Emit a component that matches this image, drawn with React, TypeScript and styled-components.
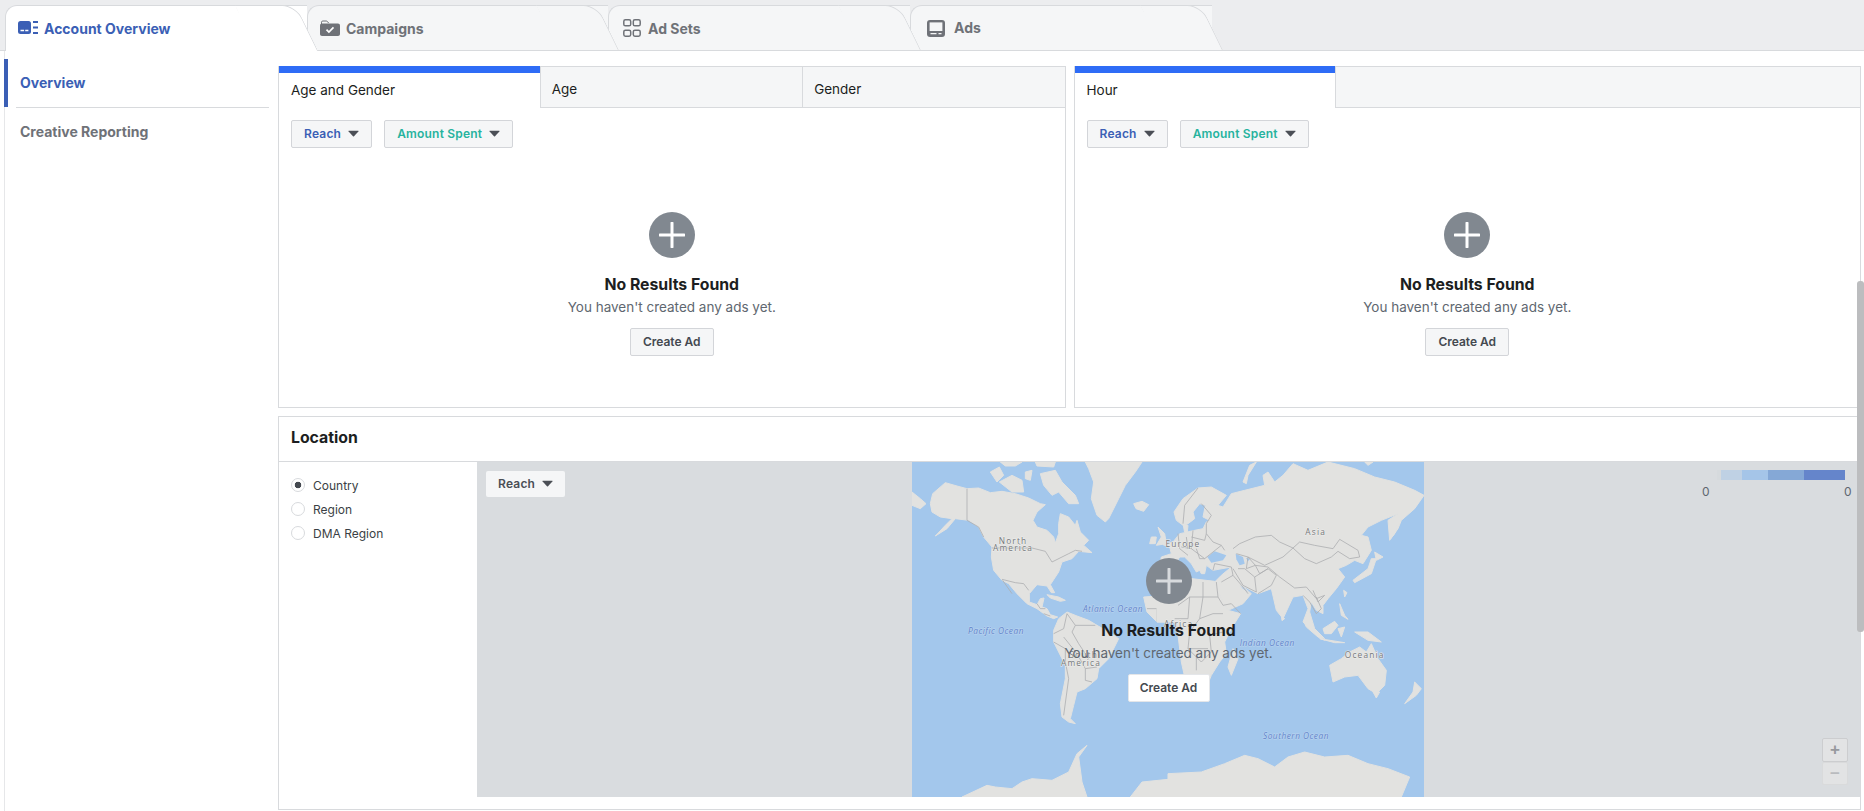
import React from "react";
import styled, { createGlobalStyle } from "styled-components";

/* ===== page ===== */
const GlobalStyle = createGlobalStyle`
  html, body {
    margin: 0;
    padding: 0;
    height: 811px;
    overflow: hidden;
    background: #ffffff;
    font-family: Inter, "Liberation Sans", sans-serif;
    color: #1c1e21;
  }
  * { box-sizing: border-box; }
`;

const Page = styled.div`
  position: relative;
  width: 1864px;
  height: 811px;
  overflow: hidden;
`;

/* ===== top tabs ===== */
const TabBar = styled.div`
  display: flex;
  height: 51px;
  padding: 5px 0 0 5px;
  background: #ecedef;
  border-bottom: 1px solid #d8dadd;
`;

const Tab = styled.div<{ $active?: boolean; $z: number; $inset: number; $gap: number; $width: number }>`
  position: relative;
  z-index: ${(p) => p.$z};
  flex: 0 0 ${(p) => p.$width}px;
  height: ${(p) => (p.$active ? 46 : 45)}px;
  display: flex;
  align-items: center;
  gap: ${(p) => p.$gap}px;
  padding: 0 0 ${(p) => (p.$active ? 1 : 0)}px ${(p) => p.$inset}px;
  background: ${(p) => (p.$active ? "#ffffff" : "#f5f6f7")};
  border-top: 1px solid #d8dadd;
  border-left: 1px solid #d8dadd;
  border-top-left-radius: 12px;
  font-size: 14px;
  font-weight: 700;
  color: ${(p) => (p.$active ? "#3b5fb5" : "#6f7278")};

  &::after {
    content: "";
    position: absolute;
    top: -1px;
    bottom: 0;
    right: 0;
    width: 60px;
    background: ${(p) => (p.$active ? "#ffffff" : "#f5f6f7")};
    border-top: 1px solid #d8dadd;
    border-right: 1px solid #d8dadd;
    border-top-right-radius: 14px;
    transform: skewX(26deg);
  }
`;

const TabContent = styled.span<{ $lift?: boolean }>`
  position: relative;
  z-index: 1;
  display: flex;
  top: ${(p) => (p.$lift ? -1 : 0)}px;
`;

/* ===== shell ===== */
const Main = styled.div`
  display: flex;
  height: 760px;
  margin-left: 4px;
`;

const Sidebar = styled.nav`
  flex: 0 0 274px;
  padding-top: 8px;
  border-left: 1px solid #e6e7e9;
`;

const SideItem = styled.div<{ $active?: boolean }>`
  position: relative;
  height: ${(p) => (p.$active ? 49 : 48)}px;
  margin-left: 11px;
  width: 253px;
  display: flex;
  align-items: center;
  padding: 0 0 2px 4px;
  font-size: 14px;
  font-weight: 700;
  color: ${(p) => (p.$active ? "#3b5fb5" : "#6f7278")};
  border-bottom: ${(p) => (p.$active ? "1px solid #d8dadd" : "0")};

  ${(p) =>
    p.$active &&
    `&::before {
      content: "";
      position: absolute;
      left: -12px;
      top: 0;
      bottom: 0;
      width: 4px;
      background: #3b5fb5;
    }`}
`;

const Content = styled.main`
  flex: 1;
  display: flex;
  flex-direction: column;
  gap: 8px;
  padding: 15px 3px 0 0;
`;

const ChartRow = styled.div`
  display: flex;
  gap: 8px;
  height: 342px;
`;

const ChartPanel = styled.section`
  flex: 1;
  min-width: 0;
  border: 1px solid #d8dadd;
  background: #ffffff;
`;

const TabStrip = styled.div`
  display: flex;
  height: 41px;
`;

const StripTab = styled.div<{ $active?: boolean; $fill?: boolean }>`
  position: relative;
  flex: ${(p) => (p.$fill ? "1 1 0" : p.$active ? "0 0 33.2%" : "0 0 33.4%")};
  display: flex;
  align-items: center;
  padding: 4px 0 0 ${(p) => (p.$active ? 12 : 11)}px;
  font-size: 13.5px;
  color: #1c1e21;
  background: ${(p) => (p.$active ? "#ffffff" : "#f5f6f7")};
  border-bottom: ${(p) => (p.$active ? "0" : "1px solid #d8dadd")};
  border-left: ${(p) => (p.$active ? "0" : "1px solid #d8dadd")};

  ${(p) =>
    p.$active &&
    `&::before {
      content: "";
      position: absolute;
      left: 0;
      right: 0;
      top: -1px;
      height: 7px;
      background: #2e6cf6;
    }`}
`;

const Toolbar = styled.div`
  display: flex;
  gap: 12px;
  padding: 12px 12px 0;
`;

const Dropdown = styled.button<{ $tone: string; $plain?: boolean }>`
  display: inline-flex;
  align-items: center;
  gap: 7px;
  height: ${(p) => (p.$plain ? 26 : 28)}px;
  padding: 0 12px 1px 12px;
  font-family: inherit;
  font-size: 12px;
  font-weight: 600;
  letter-spacing: 0.2px;
  color: ${(p) => p.$tone};
  background: #f5f6f7;
  border: ${(p) => (p.$plain ? "0" : "1px solid #d3d5d9")};
  border-radius: 2px;
`;

const CaretIcon = () => (
  <svg width="11" height="7" viewBox="0 0 11 7">
    <path d="M1 .7h9c.5 0 .7.5.4.9L6 6.2c-.3.3-.7.3-1 0L.6 1.6C.3 1.2.5.7 1 .7z" fill="#4b4f56" />
  </svg>
);

/* ===== no results ===== */
const Empty = styled.div<{ $overlay?: boolean }>`
  display: flex;
  flex-direction: column;
  align-items: center;
  margin-top: ${(p) => (p.$overlay ? 0 : 64)}px;

  ${(p) =>
    p.$overlay &&
    `position: absolute;
     left: 0;
     right: 0;
     top: 96px;`}
`;

const PlusBadge = styled.div`
  position: relative;
  width: 46px;
  height: 46px;
  border-radius: 50%;
  background: #818890;
`;

const PlusIcon = styled.svg`
  position: absolute;
  left: 10px;
  top: 10px;
`;

const EmptyTitle = styled.div`
  margin-top: 17px;
  height: 20px;
  line-height: 20px;
  font-size: 15.8px;
  font-weight: 700;
  color: #1c1e21;
`;

const EmptyText = styled.div`
  margin-top: 2px;
  height: 20px;
  line-height: 20px;
  font-size: 13.5px;
  color: #606770;
`;

const CreateButton = styled.button<{ $light?: boolean }>`
  margin-top: 11px;
  width: ${(p) => (p.$light ? 82 : 84)}px;
  height: 28px;
  padding: 0 0 2px;
  font-family: inherit;
  font-size: 12px;
  font-weight: 600;
  color: #444950;
  background: ${(p) => (p.$light ? "#ffffff" : "#f5f6f7")};
  border: 1px solid ${(p) => (p.$light ? "#e4e6e9" : "#d3d5d9")};
  border-radius: 2px;
`;

const NoResults = ({ overlay }: { overlay?: boolean }) => (
  <Empty $overlay={overlay}>
    <PlusBadge>
      <PlusIcon width="26" height="26" viewBox="0 0 26 26">
        <path d="M13 1v24M1 13h24" stroke={overlay ? "#d7dadd" : "#ffffff"} strokeWidth="3" strokeLinecap="round" />
      </PlusIcon>
    </PlusBadge>
    <EmptyTitle>No Results Found</EmptyTitle>
    <EmptyText>You haven't created any ads yet.</EmptyText>
    <CreateButton $light={overlay}>Create Ad</CreateButton>
  </Empty>
);

/* ===== location ===== */
const LocationPanel = styled.section`
  height: 394px;
  border: 1px solid #d8dadd;
  background: #ffffff;
`;

const LocationHeader = styled.h2`
  margin: 0;
  height: 45px;
  display: flex;
  align-items: center;
  padding: 0 0 4px 12px;
  font-size: 15.8px;
  font-weight: 700;
  color: #1c1e21;
  border-bottom: 1px solid #d8dadd;
`;

const LocationBody = styled.div`
  display: flex;
  height: 335px;
`;

const RadioColumn = styled.div`
  flex: 0 0 198px;
  display: flex;
  flex-direction: column;
  gap: 10px;
  padding: 16px 0 0 12px;
`;

const RadioRow = styled.label`
  display: flex;
  align-items: center;
  gap: 8px;
  height: 14px;
  font-size: 12px;
  color: #3b3f45;
`;

const RadioDot = styled.span<{ $on?: boolean }>`
  width: 14px;
  height: 14px;
  border-radius: 50%;
  border: 1px solid #d8dadd;
  background: ${(p) => (p.$on ? "radial-gradient(circle, #444950 0 3px, #ffffff 3.6px)" : "#ffffff")};
`;

const MapArea = styled.div`
  position: relative;
  flex: 1;
  display: flex;
  justify-content: center;
  background: #d9dcdf;
  overflow: hidden;
`;

const MapCanvas = styled.svg`
  display: block;
  flex: none;
  margin-right: 1px;
`;

const MapButtonSlot = styled.div`
  position: absolute;
  left: 9px;
  top: 9px;
`;

const Legend = styled.div`
  position: absolute;
  top: 8px;
  right: 0;
  width: 158px;
  height: 36px;
`;

const LegendBar = styled.div`
  position: absolute;
  left: 15px;
  top: 0;
  display: flex;
  height: 10px;
`;

const LegendStep = styled.span<{ $w: number; $c: string }>`
  width: ${(p) => p.$w}px;
  background: ${(p) => p.$c};
`;

const LegendValue = styled.span<{ $left: number }>`
  position: absolute;
  left: ${(p) => p.$left}px;
  top: 14px;
  font-size: 12px;
  line-height: 16px;
  color: #606770;
`;

const ZoomStack = styled.div`
  position: absolute;
  right: 12px;
  bottom: 12px;
  display: flex;
  flex-direction: column;
  width: 26px;
`;

const ZoomButton = styled.div<{ $dim?: boolean }>`
  height: ${(p) => (p.$dim ? 23 : 24)}px;
  display: flex;
  align-items: center;
  justify-content: center;
  font-family: "Liberation Sans", sans-serif;
  font-size: 17px;
  font-weight: 700;
  color: ${(p) => (p.$dim ? "#b9bbbe" : "#97999e")};
  background: #e2e3e4;
  border: 1px solid ${(p) => (p.$dim ? "#d9dadb" : "#cccdcf")};
  border-radius: 2px;
`;

const Scrollbar = styled.div`
  position: absolute;
  right: 0;
  top: 281px;
  width: 7px;
  height: 351px;
  background: #bcbdbf;
  border-radius: 3px;
`;

const MapLabel = styled.text<{ $ocean?: boolean }>`
  font-family: "Open Sans", "Liberation Sans", sans-serif;
  font-size: 25px;
  font-style: ${(p) => (p.$ocean ? "italic" : "normal")};
  letter-spacing: ${(p) => (p.$ocean ? 1.5 : 3.5)}px;
  text-anchor: middle;
  fill: ${(p) => (p.$ocean ? "#5f84cc" : "#74767a")};
  stroke: ${(p) => (p.$ocean ? "#bdd5ef" : "#eeeeec")};
  stroke-width: 3px;
  paint-order: stroke;
`;

/* map shapes are in 3x map pixels, west half and east half traced separately */
const WEST_LAND = [
  "M55 125 62 95 100 62 135 72 165 80 200 78 235 92 270 88 310 95 350 108 385 125 400 128 375 150 363 175 375 195 405 205 425 225 430 243 440 215 440 185 445 155 470 165 490 190 495 175 505 210 530 235 515 250 540 272 500 268 480 290 450 300 440 330 415 368 428 392 418 392 405 372 375 368 352 395 352 420 375 428 385 410 396 408 390 435 405 440 415 458 437 465 425 470 405 462 375 440 345 425 315 395 290 365 270 355 245 325 238 285 240 255 215 225 200 195 170 175 130 170 105 200 70 222 100 190 120 170 85 165 60 150Z",
  "M235 30 262 15 275 40 255 60Z",
  "M262 60 300 40 330 55 335 90 300 90Z",
  "M340 30 360 25 355 55 340 50Z",
  "M385 35 430 25 450 60 490 100 500 125 470 125 440 90 420 100 395 70Z",
  "M265 0H330L310 12 280 12Z",
  "M370 0H430L425 15 375 12Z",
  "M520 0H690L670 30 640 70 620 110 590 170 580 180 555 160 538 110 545 60 530 20Z",
  "M665 125 690 118 710 128 695 148 672 140Z",
  "M0 90 25 110 42 125 25 140 0 130Z",
  "M425 505 440 470 465 450 495 462 530 475 555 490 590 510 620 530 600 570 590 590 560 620 555 650 520 680 495 690 485 730 475 770 490 785 470 780 450 765 445 725 460 650 460 610 440 570 425 540Z",
  "M150 1005 225 970 250 975 300 980 330 960 360 950 420 955 470 930 495 875 525 850 500 885 510 960 525 1005Z",
  "M655 1005 690 960 768 952V1005Z",
  "M405 398 440 405 460 415 445 418 415 408Z",
  "M695 405 768 400V480H735L705 450Z",
];

const EAST_LAND = [
  "M-20 285 10 275 5 255-15 248 15 240 35 215 50 212 45 185 60 190 58 210 80 205 105 200 115 180 125 175 105 165 112 130 95 125 75 150 80 170 60 185 45 190 25 175 18 150 45 110 90 78 130 75 175 100 150 130 135 125 165 135 190 95 230 85 290 70 285 40 300 30 320 60 345 40 375 5 420 25 480 0 560 20 620 45 680 60 740 85 768 100 740 140 700 175 690 200 665 235 660 175 690 155 640 175 600 195 580 220 600 225 610 265 585 305 560 295 535 310 510 320 530 345 505 380 480 410 465 430 465 455 445 445 430 420 425 450 440 500 470 530 440 510 405 480 420 440 405 400 375 405 345 470 325 445 310 380 270 395 240 380 218 368 250 395 225 425 180 445 150 390 140 360 160 340 190 315 135 325 115 310 110 335 100 335 85 305 95 325 85 330 70 305 50 285 35 285 20 310-5 320-25 310Z",
  "M-30 195-10 215-5 245-35 250-20 225Z",
  "M-50 225-35 225-38 245-55 245Z",
  "M0 400 30 345 140 358 150 390 180 445 218 455 190 500 170 540 175 575 155 600 130 640 110 690 60 690 40 600 30 520 20 480-33 480-33 400Z",
  "M195 560 210 590 190 640 180 615Z",
  "M225 60 245 10 265 0 240 40 235 65Z",
  "M590 0H615L600 10Z",
  "M555 355 600 320 610 290 625 290 610 335 560 362Z",
  "M620 270 645 285 625 295Z",
  "M668 230 690 180 700 170 680 215Z",
  "M527 385 537 392 530 405Z",
  "M515 425 530 460 540 472 520 460Z",
  "M408 480 440 500 470 535 450 525 415 495Z",
  "M455 530 530 542 500 542Z",
  "M465 500 500 478 510 490 490 515 470 515Z",
  "M510 500 530 495 520 525Z",
  "M560 510 600 510 640 540 600 535Z",
  "M340 460 350 470 342 476Z",
  "M485 610 520 590 545 570 575 555 595 570 610 545 630 590 655 625 650 670 625 695 600 680 570 640 530 645 495 660Z",
  "M615 690 635 690 625 708Z",
  "M740 660 760 680 745 700 710 725 735 690Z",
  "M0 1005V935L100 930 170 905 230 880 270 890 320 915 360 885 410 870 470 885 540 880 600 905 660 920 725 945 700 1005Z",
];

const EAST_SEAS = [
  "M118 285 140 268 175 280 165 295 130 302Z",
  "M203 275 225 285 230 305 215 310 205 292Z",
  "M215 370 245 392 225 380Z",
  "M234 288 246 290 240 298Z",
];

const WEST_BORDERS = [
  "M165 80V175L200 195 215 225",
  "M240 258H360L400 268 420 300 470 275 490 265 510 268",
  "M270 352 310 362 335 365 350 385",
  "M375 425 385 440 400 440M395 455 415 462",
  "M425 515 455 500 465 455 490 490 550 490",
  "M455 525 495 575 520 620 555 615",
  "M425 540 460 560 460 600 470 650 455 760",
  "M490 490 480 510 500 545 530 590",
  "M520 620 520 655 540 660",
  "M272 355 300 395",
  "M705 440H768M735 440V480",
];

const EAST_BORDERS = [
  "M195 260 215 245 262 225 310 220 335 240 375 258",
  "M375 258 395 240 440 250 495 260 515 232 570 265 575 285 545 290 510 268 490 285 445 305 410 290 375 258",
  "M205 275 240 285 290 310 345 285 375 258",
  "M300 315 335 345 380 378 415 375 445 410 470 400",
  "M300 320 325 340 310 370 270 395",
  "M240 285 262 310 300 315",
  "M195 320 225 370 265 390 260 345 230 320 210 320",
  "M260 345 300 320",
  "M160 360 195 340 225 375 240 395",
  "M405 400 425 420 445 455 460 440 445 405",
  "M30 215 35 260 60 280",
  "M75 205 70 260 110 290 160 250 170 265",
  "M115 185 115 215 135 240 160 250",
  "M100 125 130 160 115 185",
  "M90 78 50 130 45 185",
  "M30 430 65 405 105 405 150 405 145 360",
  "M105 360V405L95 470 135 455 165 455",
  "M65 405 60 470 20 470",
  "M95 470 65 510 60 560 100 600 130 570 125 520 165 510",
  "M85 580V625M60 560H120",
  "M70 225 110 235 115 215M70 260 40 255M85 260 95 290 110 290M55 225 60 260",
  "M135 325 140 305 190 315 195 340",
  "M240 285 235 320 262 310M262 310 275 335 300 320",
  "M435 385 450 420 470 400",
  "M150 405 165 430 190 425 218 455",
];

const WorldMap = () => (
  <MapCanvas width="512" height="335" viewBox="0 0 1536 1005">
    <rect width="1536" height="1005" fill="#a3c7ec" />
    <g fill="#e2e2e0" stroke="#e2e2e0" strokeWidth="3" strokeLinejoin="round">
      {WEST_LAND.map((d) => (
        <path key={d} d={d} />
      ))}
    </g>
    <g fill="none" stroke="#aeb0b2" strokeWidth="2.5" strokeLinejoin="round">
      {WEST_BORDERS.map((d) => (
        <path key={d} d={d} />
      ))}
    </g>
    <g transform="translate(768 0)">
      <g fill="#e2e2e0" stroke="#e2e2e0" strokeWidth="3" strokeLinejoin="round">
        {EAST_LAND.map((d) => (
          <path key={d} d={d} />
        ))}
      </g>
      <g fill="#a3c7ec">
        {EAST_SEAS.map((d) => (
          <path key={d} d={d} />
        ))}
      </g>
      <g fill="none" stroke="#aeb0b2" strokeWidth="2.5" strokeLinejoin="round">
        {EAST_BORDERS.map((d) => (
          <path key={d} d={d} />
        ))}
      </g>
    </g>
    <MapLabel x="303" y="245">North</MapLabel>
    <MapLabel x="303" y="268">America</MapLabel>
    <MapLabel x="515" y="587">South</MapLabel>
    <MapLabel x="507" y="612">America</MapLabel>
    <MapLabel x="813" y="256">Europe</MapLabel>
    <MapLabel x="800" y="495">Africa</MapLabel>
    <MapLabel x="1211" y="220">Asia</MapLabel>
    <MapLabel x="1358" y="589">Oceania</MapLabel>
    <MapLabel $ocean x="603" y="451">Atlantic Ocean</MapLabel>
    <MapLabel $ocean x="252" y="517">Pacific Ocean</MapLabel>
    <MapLabel $ocean x="1066" y="553">Indian Ocean</MapLabel>
    <MapLabel $ocean x="1152" y="832">Southern Ocean</MapLabel>
  </MapCanvas>
);

/* ===== tab icons ===== */
const OverviewIcon = () => (
  <svg width="20" height="14" viewBox="0 0 20 14">
    <rect x="0" y="0" width="13" height="13" rx="2.5" fill="#3b5fb5" />
    <path d="M2.5 9.5h3.6M7.2 9.5h3.2" stroke="#fff" strokeWidth="1.4" />
    <path d="M15 1h5M15 6.5h5M15 12h5" stroke="#3b5fb5" strokeWidth="2" />
  </svg>
);

const CampaignIcon = () => (
  <svg width="20" height="16" viewBox="0 0 20 16">
    <path d="M1.5 5V2.2C1.5 1.4 2 1 2.8 1h3.4c.6 0 1 .2 1.4.7L8.6 3" fill="none" stroke="#6f7278" strokeWidth="1" />
    <path d="M2 3.5h16c1.1 0 2 .9 2 2V14c0 1.1-.9 2-2 2H2c-1.1 0-2-.9-2-2V5.5c0-1.1.9-2 2-2z" fill="#6f7278" />
    <path d="M6.5 9.6l2.4 2.4 4.6-4.6" fill="none" stroke="#fff" strokeWidth="1.7" />
  </svg>
);

const AdSetIcon = () => (
  <svg width="18" height="18" viewBox="0 0 18 18" fill="none" stroke="#6f7278" strokeWidth="1.5">
    <rect x=".8" y=".8" width="6.9" height="6" rx="1.6" />
    <rect x="10.3" y=".8" width="6.9" height="6" rx="1.6" />
    <rect x=".8" y="11.2" width="6.9" height="6" rx="1.6" />
    <rect x="10.3" y="11.2" width="6.9" height="6" rx="1.6" />
  </svg>
);

const AdIcon = () => (
  <svg width="18" height="17" viewBox="0 0 18 17">
    <rect x="0" y="0" width="18" height="17" rx="3" fill="#6f7278" />
    <rect x="2.6" y="2.4" width="12.8" height="8.6" fill="#f5f6f7" />
    <path d="M3.5 13.6h6M11.5 13.6h3" stroke="#f5f6f7" strokeWidth="1.3" />
  </svg>
);

const METRICS = ["Reach", "Amount Spent"];

const MetricToolbar = () => (
  <Toolbar>
    {METRICS.map((metric, i) => (
      <Dropdown key={metric} $tone={i === 0 ? "#3b5fb5" : "#27b39e"}>
        {metric}
        <CaretIcon />
      </Dropdown>
    ))}
  </Toolbar>
);

const LEGEND_STEPS = [
  { w: 4, c: "#d6dadd" },
  { w: 21, c: "#bfd1e4" },
  { w: 26, c: "#a5c5e8" },
  { w: 36, c: "#85a8d6" },
  { w: 41, c: "#6585cb" },
];

const REGIONS = ["Country", "Region", "DMA Region"];

export default function App() {
  return (
    <Page>
      <GlobalStyle />
      <TabBar>
        <Tab $active $z={4} $inset={12} $gap={6} $width={302}>
          <TabContent><OverviewIcon /></TabContent>
          <TabContent>Account Overview</TabContent>
        </Tab>
        <Tab $z={3} $inset={12} $gap={6} $width={301}>
          <TabContent><CampaignIcon /></TabContent>
          <TabContent>Campaigns</TabContent>
        </Tab>
        <Tab $z={2} $inset={14} $gap={7} $width={302}>
          <TabContent><AdSetIcon /></TabContent>
          <TabContent>Ad Sets</TabContent>
        </Tab>
        <Tab $z={1} $inset={16} $gap={9} $width={302}>
          <TabContent><AdIcon /></TabContent>
          <TabContent $lift>Ads</TabContent>
        </Tab>
      </TabBar>

      <Main>
        <Sidebar>
          <SideItem $active>Overview</SideItem>
          <SideItem>Creative Reporting</SideItem>
        </Sidebar>

        <Content>
          <ChartRow>
            <ChartPanel>
              <TabStrip>
                <StripTab $active>Age and Gender</StripTab>
                <StripTab>Age</StripTab>
                <StripTab $fill>Gender</StripTab>
              </TabStrip>
              <MetricToolbar />
              <NoResults />
            </ChartPanel>
            <ChartPanel>
              <TabStrip>
                <StripTab $active>Hour</StripTab>
                <StripTab $fill />
              </TabStrip>
              <MetricToolbar />
              <NoResults />
            </ChartPanel>
          </ChartRow>

          <LocationPanel>
            <LocationHeader>Location</LocationHeader>
            <LocationBody>
              <RadioColumn>
                {REGIONS.map((region, i) => (
                  <RadioRow key={region}>
                    <RadioDot $on={i === 0} />
                    {region}
                  </RadioRow>
                ))}
              </RadioColumn>
              <MapArea>
                <WorldMap />
                <MapButtonSlot>
                  <Dropdown $plain $tone="#4b4f56">
                    Reach
                    <CaretIcon />
                  </Dropdown>
                </MapButtonSlot>
                <Legend>
                  <LegendBar>
                    {LEGEND_STEPS.map((step) => (
                      <LegendStep key={step.c} $w={step.w} $c={step.c} />
                    ))}
                  </LegendBar>
                  <LegendValue $left={0}>0</LegendValue>
                  <LegendValue $left={142}>0</LegendValue>
                </Legend>
                <ZoomStack>
                  <ZoomButton>+</ZoomButton>
                  <ZoomButton $dim>−</ZoomButton>
                </ZoomStack>
                <NoResults overlay />
              </MapArea>
            </LocationBody>
          </LocationPanel>
        </Content>
      </Main>
      <Scrollbar />
    </Page>
  );
}
